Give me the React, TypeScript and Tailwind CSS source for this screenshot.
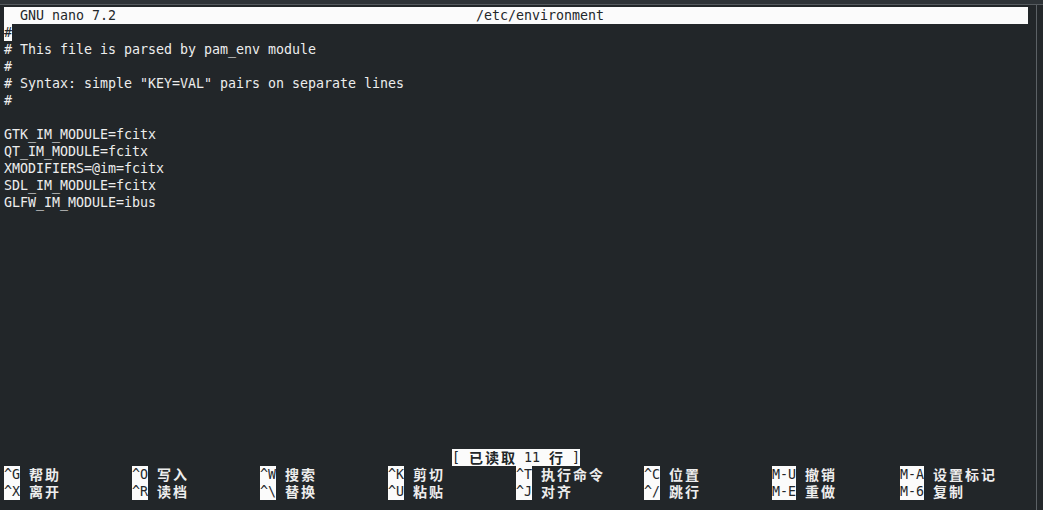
import React from "react";

const isWide = (ch: string) => /[\u2E80-\u9FFF\uFF00-\uFFEF]/.test(ch);

function Txt({ s, inv = false }: { s: string; inv?: boolean }) {
  return (
    <span className={inv ? "flex bg-[#fbfbfb] text-[#23272a]" : "flex"}>
      {Array.from(s).map((ch, i) =>
        isWide(ch) ? (
          <span
            key={i}
            className="inline-block w-[16px] text-center text-[14px] font-bold font-['Noto_Sans_CJK_SC',sans-serif] leading-[17px]"
          >
            {ch}
          </span>
        ) : (
          <span key={i} className="inline-block w-[8px] whitespace-pre text-center leading-[17px]">
            {ch}
          </span>
        )
      )}
    </span>
  );
}

function Row({ children }: { children?: React.ReactNode }) {
  return <div className="flex h-[17px] items-center">{children}</div>;
}

const lines = [
  "# This file is parsed by pam_env module",
  "#",
  '# Syntax: simple "KEY=VAL" pairs on separate lines',
  "#",
  "",
  "GTK_IM_MODULE=fcitx",
  "QT_IM_MODULE=fcitx",
  "XMODIFIERS=@im=fcitx",
  "SDL_IM_MODULE=fcitx",
  "GLFW_IM_MODULE=ibus",
];

const row1: [string, string][] = [
  ["^G", "帮助"],
  ["^O", "写入"],
  ["^W", "搜索"],
  ["^K", "剪切"],
  ["^T", "执行命令"],
  ["^C", "位置"],
  ["M-U", "撤销"],
  ["M-A", "设置标记"],
];
const row2: [string, string][] = [
  ["^X", "离开"],
  ["^R", "读档"],
  ["^\\", "替换"],
  ["^U", "粘贴"],
  ["^J", "对齐"],
  ["^/", "跳行"],
  ["M-E", "重做"],
  ["M-6", "复制"],
];

function Shortcuts({ items }: { items: [string, string][] }) {
  return (
    <Row>
      {items.map(([k, l], i) => (
        <div key={i} className="flex w-[128px]">
          <Txt s={k} inv />
          <Txt s={" " + l} />
        </div>
      ))}
    </Row>
  );
}

export default function App() {
  const title = "  GNU nano 7.2".padEnd(59, " ") + "/etc/environment";
  return (
    <div className="flex h-[510px] w-[1043px] flex-col overflow-hidden bg-[#222629] font-['DejaVu_Sans_Mono',monospace] text-[13.3px] text-[#ededed]">
      <div className="h-[4px] bg-[#2e3337]" />
      <div className="h-[1px] bg-[#555a5e]" />
      <div className="flex flex-1">
        <div className="flex w-[1028px] flex-col pl-[4px] pt-[2px]">
          <Row>
            <div className="flex w-[1024px] bg-[#fbfbfb] text-[#23272a]">
              <Txt s={title} />
            </div>
          </Row>
          <Row>
            <Txt s="#" inv />
          </Row>
          {lines.map((l, i) => (
            <Row key={i}>
              <Txt s={l} />
            </Row>
          ))}
          {Array.from({ length: 14 }).map((_, i) => (
            <Row key={"e" + i} />
          ))}
          <Row>
            <div className="w-[448px]" />
            <Txt s="[ 已读取 11 行 ]" inv />
          </Row>
          <Shortcuts items={row1} />
          <Shortcuts items={row2} />
        </div>
        <div className="w-[8px]" />
        <div className="w-[1px] bg-[#5c6165]" />
        <div className="flex-1 bg-[#23272a]" />
      </div>
    </div>
  );
}
